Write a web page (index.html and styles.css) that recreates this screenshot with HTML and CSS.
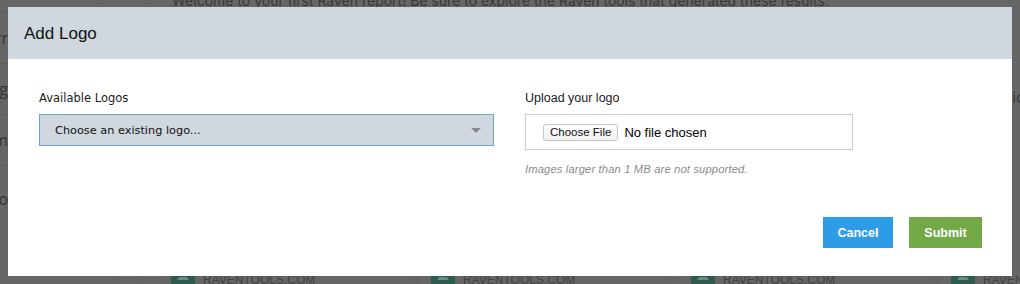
FILE: index.html
```html
<!DOCTYPE html>
<html>
<head>
<meta charset="utf-8">
<link rel="stylesheet" href="styles.css">
</head>
<body>
<div class="backdrop">
  <div class="bg-top">
    <span class="grip"></span><span class="grip"></span>
    <span class="welcome">Welcome to your first Raven report! Be sure to explore the Raven tools that generated these results.</span>
  </div>
  <div class="bg-side">
    <div class="side-row">rr</div>
    <div class="side-row">ig</div>
    <div class="side-row">m</div>
    <div class="side-row tall">o</div>
  </div>
  <div class="bg-right">ic</div>
  <div class="bg-bottom">
    <div class="tile"><span class="grip"></span><span class="badge"><i></i></span><span class="site">RAVENTOOLS.COM</span></div>
    <div class="tile"><span class="grip"></span><span class="badge"><i></i></span><span class="site">RAVENTOOLS.COM</span></div>
    <div class="tile"><span class="grip"></span><span class="badge"><i></i></span><span class="site">RAVENTOOLS.COM</span></div>
    <div class="tile"><span class="grip"></span><span class="badge"><i></i></span><span class="site">RAVENTOOLS.COM</span></div>
  </div>
</div>

<div class="modal">
  <div class="modal-header">Add Logo</div>
  <div class="modal-body">
    <div class="field field-left">
      <div class="label">Available Logos</div>
      <div class="select">
        <span>Choose an existing logo...</span>
        <span class="caret"></span>
      </div>
    </div>
    <div class="field field-right">
      <div class="label">Upload your logo</div>
      <div class="filebox">
        <span class="filebtn">Choose File</span>
        <span class="nofile">No file chosen</span>
      </div>
      <div class="help">Images larger than 1 MB are not supported.</div>
    </div>
  </div>
  <div class="modal-footer">
    <span class="btn btn-cancel">Cancel</span>
    <span class="btn btn-submit">Submit</span>
  </div>
</div>
</body>
</html>
```

FILE: styles.css
```css
html, body {
  margin: 0;
  padding: 0;
}
body {
  width: 1020px;
  height: 284px;
  overflow: hidden;
  position: relative;
  background: #666666;
  font-family: "DejaVu Sans", Verdana, sans-serif;
}

/* dimmed page behind overlay */
.backdrop {
  position: absolute;
  inset: 0;
  color: #3a3a3a;
}
.bg-top {
  position: absolute;
  left: 0;
  top: -8px;
  height: 16px;
  display: flex;
  align-items: center;
  font-family: "Inter", "Open Sans", sans-serif;
  font-size: 14px;
}
.bg-top .grip {
  width: 10px;
  height: 8px;
  margin-left: 95px;
  background-image: radial-gradient(#5a5a5a 35%, transparent 40%);
  background-size: 3px 3px;
}
.bg-top .grip + .grip {
  margin-left: 36px;
}
.welcome {
  margin-left: 21px;
  white-space: nowrap;
  color: #383838;
}
.bg-side {
  position: absolute;
  left: 0;
  top: 12px;
  width: 8px;
  overflow: hidden;
  display: flex;
  flex-direction: column;
  font-family: "Open Sans", sans-serif;
  font-size: 16px;
  color: #333;
}
.side-row {
  height: 50px;
  border-top: 1px solid #5e5e5e;
  display: flex;
  align-items: center;
  justify-content: flex-end;
  white-space: nowrap;
}
.side-row.tall {
  height: 65px;
}
.bg-right {
  position: absolute;
  left: 1012px;
  top: 86px;
  font-family: "Open Sans", sans-serif;
  font-size: 16px;
  color: #3a3a3a;
  white-space: nowrap;
}
.bg-bottom {
  position: absolute;
  left: 0;
  top: 276px;
  height: 8px;
  display: flex;
  overflow: hidden;
  width: 1020px;
}
.tile {
  flex: 0 0 260px;
  display: flex;
  align-items: flex-start;
  height: 12px;
}
.tile:first-child {
  margin-left: 114px;
}
.tile .grip {
  width: 10px;
  height: 8px;
  margin-left: 36px;
  background-image: radial-gradient(#585858 35%, transparent 40%);
  background-size: 3px 3px;
  background-position: 2px 1px;
  background-repeat: repeat;
  box-sizing: content-box;
}
.tile:first-child .grip { margin-left: 0; padding-left: 36px; background-origin: content-box; }
.badge {
  width: 24px;
  height: 10px;
  margin-left: 11px;
  background: #2d5b50;
  position: relative;
  display: flex;
  justify-content: center;
}
.badge i {
  width: 12px;
  height: 3px;
  margin-top: 1px;
  background: #6b8a84;
  clip-path: polygon(20% 0, 80% 0, 100% 100%, 0 100%);
}
.site {
  margin-left: 8px;
  margin-top: -3px;
  font-family: "Liberation Sans", Arial, sans-serif;
  font-size: 12px;
  color: #424242;
  white-space: nowrap;
}

/* modal */
.modal {
  position: absolute;
  left: 8px;
  top: 7px;
  width: 1004px;
  height: 269px;
  background: #ffffff;
  display: flex;
  flex-direction: column;
}
.modal-header {
  height: 52px;
  background: #d0d7df;
  display: flex;
  align-items: center;
  padding-left: 16px;
  padding-top: 1px;
  box-sizing: border-box;
  font-family: "Liberation Sans", Arial, sans-serif;
  font-size: 17px;
  color: #111;
}
.modal-body {
  display: flex;
  padding: 30px 0 0 31px;
  gap: 31px;
  height: 158px;
  box-sizing: border-box;
}
.field-left {
  width: 455px;
}
.label {
  font-size: 11.5px;
  color: #1a1a1a;
  height: 18px;
  line-height: 18px;
  margin-bottom: 7px;
}
.field-right .label {
  font-family: "Liberation Sans", Arial, sans-serif;
  font-size: 12.5px;
}
.select {
  height: 32px;
  box-sizing: border-box;
  background: #d0d7df;
  border: 1px solid #6ea3cd;
  display: flex;
  align-items: center;
  justify-content: space-between;
  padding: 0 12px 0 15px;
  font-size: 11.3px;
  color: #111;
}
.caret {
  width: 0;
  height: 0;
  border-left: 5px solid transparent;
  border-right: 5px solid transparent;
  border-top: 5px solid #8a8a8a;
}
.filebox {
  width: 328px;
  height: 36px;
  box-sizing: border-box;
  border: 1px solid #cccccc;
  display: flex;
  align-items: center;
  padding-left: 17px;
  font-family: "Liberation Sans", Arial, sans-serif;
}
.filebtn {
  height: 17px;
  box-sizing: border-box;
  border: 1px solid #c4c4c4;
  border-radius: 3px;
  background: linear-gradient(#fdfdfd, #f1f1f1);
  padding: 0 6px;
  font-size: 11.5px;
  line-height: 15px;
  color: #111;
}
.nofile {
  margin-left: 6px;
  font-size: 13px;
  color: #000;
}
.help {
  margin-top: 13px;
  font-family: "Liberation Sans", Arial, sans-serif;
  font-style: italic;
  font-size: 11.2px;
  letter-spacing: 0.15px;
  color: #8a8a8a;
}
.modal-footer {
  display: flex;
  justify-content: flex-end;
  gap: 16px;
  padding-right: 30px;
}
.btn {
  height: 31px;
  display: flex;
  align-items: center;
  justify-content: center;
  font-family: "Liberation Sans", Arial, sans-serif;
  font-size: 12.5px;
  font-weight: bold;
  color: #ffffff;
}
.btn-cancel {
  width: 70px;
  background: #2d9be5;
}
.btn-submit {
  width: 73px;
  background: #72a845;
}
```
